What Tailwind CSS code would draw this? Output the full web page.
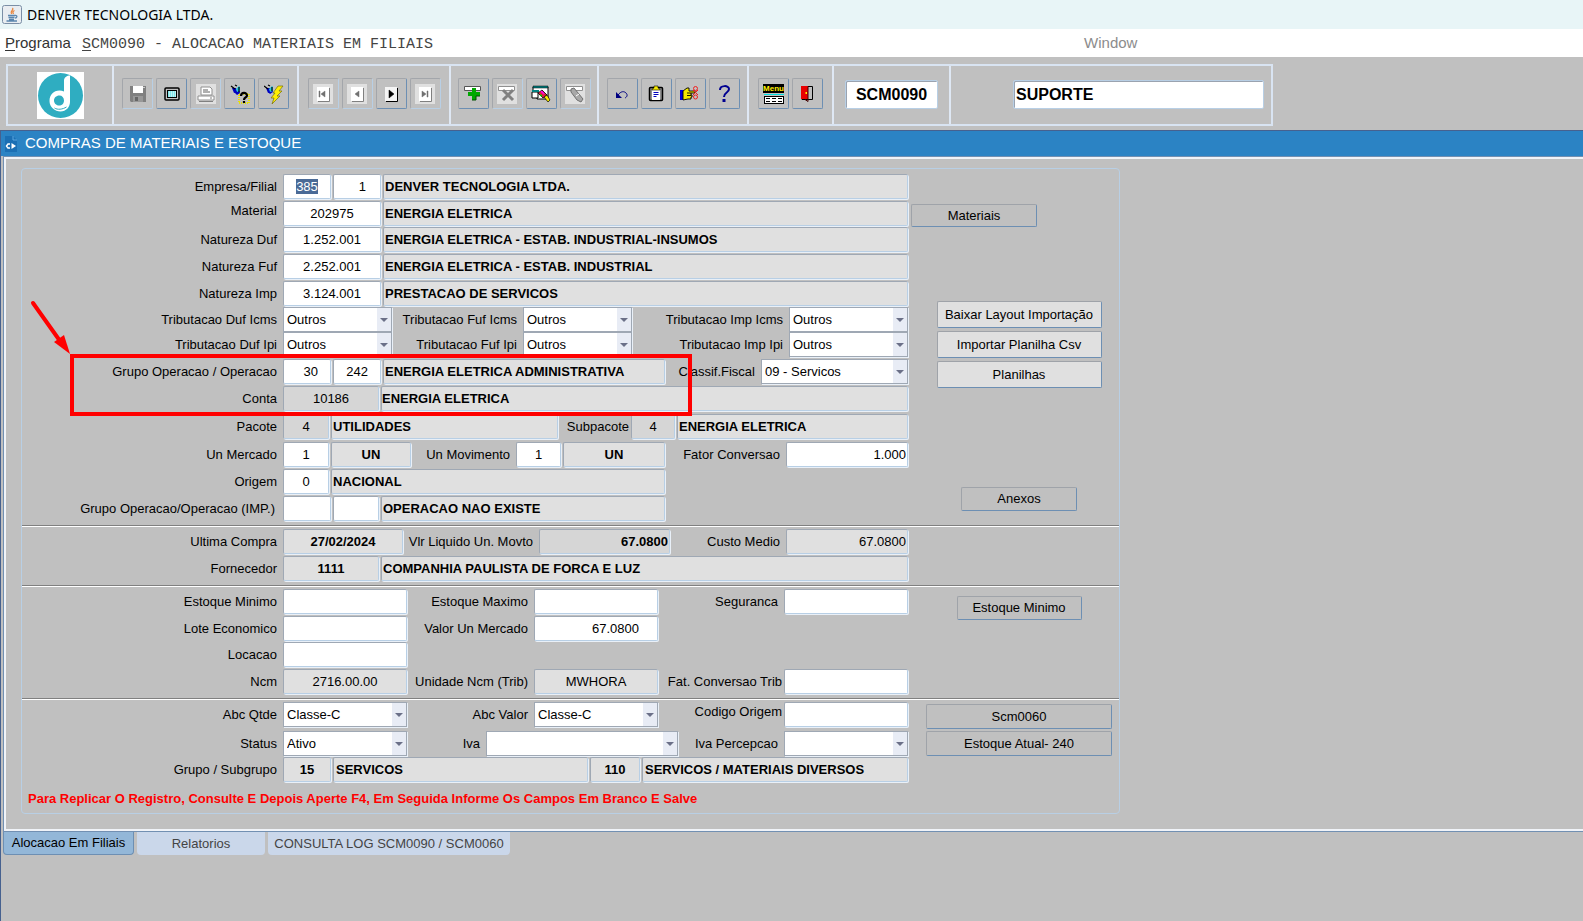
<!DOCTYPE html>
<html lang="pt-BR">
<head>
    <meta charset="UTF-8">
    <meta name="viewport" content="width=device-width, initial-scale=1.0">
    <title>DENVER TECNOLOGIA LTDA.</title>
    <script src="https://cdn.jsdelivr.net/npm/@tailwindcss/browser@4"></script>
</head>
<body class="flex min-h-screen flex-col bg-[#c0c0c0] font-['Liberation_Sans',Arial,sans-serif] text-[13px] text-black">
    <!-- Shared symbols -->
    <svg class="hidden">
        <symbol id="caret" viewBox="0 0 8 4"><path d="M0 0h8L4 4z" fill="#6b7088"/></symbol>
    </svg>

    <!-- Title bar -->
    <header class="flex h-[29px] items-center gap-[5px] bg-[#e8f5f7] pl-0.5 font-['Noto_Sans','Open_Sans',sans-serif] text-sm">
        <svg class="size-5" viewBox="0 0 20 20">
            <rect x="0.5" y="0.5" width="19" height="18" rx="2" fill="#e9edf1" stroke="#7b8fa6"/>
            <path d="M10.500 3c2 2-3 3-1 6M12.500 5.500c-2 1-2 2-1 3.500" fill="none" stroke="#e8833a" stroke-width="1.300"/>
            <path d="M6 10.500h7M6.500 12.500h6M7 14.500h5M13 10.500c3-.5 2 2.500 0 2.500M4.500 16h10.500" fill="none" stroke="#5b86ae" stroke-width="1.300"/>
        </svg>
        <h1>DENVER TECNOLOGIA LTDA.</h1>
    </header>

    <!-- Menu bar -->
    <nav class="flex h-7 items-baseline bg-white pt-[3px] pl-[5px] text-[15px] text-[#333]">
        <a href="#" class="w-[77px]"><span class="underline underline-offset-2">P</span>rograma</a>
        <a href="#" class="font-['Liberation_Mono','Courier_New',monospace] text-[#444]"><span class="underline underline-offset-2">S</span>CM0090 - ALOCACAO MATERIAIS EM FILIAIS</a>
        <a href="#" class="ml-[651px] text-[#8c8c8c]">Window</a>
    </nav>

    <!-- Toolbar -->
    <div class="mx-1.5 mt-[7px] mb-1 flex h-[62px] max-w-[1267px] border-2 border-[#d9e4f2] [&>div]:flex [&>div]:items-start [&>div]:justify-center [&>div]:gap-[3px] [&>div]:border-r-2 [&>div]:border-[#dfe8f4] [&>div]:pt-3 [&>div:last-child]:border-r-0 [&_button]:flex [&_button]:h-[31px] [&_button]:w-[31px] [&_button]:items-center [&_button]:justify-center [&_button]:rounded-xs [&_button]:border [&_button]:border-[#a3a6ab] [&_button]:border-r-[#6d8fb3] [&_button]:border-b-[#6d8fb3] [&_button:disabled]:border-r-[#b8cfe5] [&_button:disabled]:border-b-[#b8cfe5] [&_button>svg]:size-5">
        <div class="w-[106px] pt-1.5!">
            <svg class="size-[47px]" viewBox="0 0 47 47">
                <rect width="47" height="47" fill="#fff"/>
                <circle cx="23.500" cy="23.500" r="22.500" fill="#2fadc1"/>
                <path d="M33 3.500V30c0 5-4 9.500-9.500 9.500S12.500 35 12.500 29s4-10.500 10-10.500c1.500 0 3 .3 4.500 1V8.500c0-3 3-5 6-5zM22.500 23.500c-3.500 0-5.500 2.500-5.500 5s2 5 5 5 5-2 5-5-2-5-4.500-5z" fill="#fff" fill-rule="evenodd"/>
                <path d="M17.500 36c3 2 8 1.500 12-1" fill="none" stroke="#2fadc1" stroke-width="1"/>
            </svg>
        </div>
        <div class="w-[185px]">
            <button disabled aria-label="Salvar">
                <svg viewBox="0 0 20 20"><path d="M2 2h16v16H3l-1-1z" fill="#808080"/><path d="M5 2h10v7H5z" fill="#fff"/><path d="M5 12h10v6H5z" fill="#989898"/><path d="M7 13h3v4H7z" fill="#666"/><path d="M15 3h2v1h-2z" fill="#ccc"/></svg>
            </button>
            <button aria-label="Tela">
                <svg viewBox="0 0 20 20"><rect x="3" y="4" width="14" height="12" rx="1" fill="#c0c0c0" stroke="#000" stroke-width="1.500"/><rect x="5.500" y="6.500" width="9" height="7" fill="#7fe6ea" stroke="#000"/><path d="M7 8h7M7 10h7M7 12h7" stroke="#fff" stroke-dasharray="1 1"/></svg>
            </button>
            <button disabled aria-label="Imprimir">
                <svg viewBox="0 0 20 20"><path d="M0 0h20v20H0z" fill="#e0e0e0"/><path d="M5 3h9l2 2v6H5z" fill="#fff" stroke="#909090"/><path d="M7 6h5M7 8h7" stroke="#606060"/><path d="M2 12h16v4H2z" fill="#fff" stroke="#909090"/><path d="M3 17.500h14M14 14h2" stroke="#808080"/></svg>
            </button>
            <button aria-label="Entrar consulta">
                <svg viewBox="0 0 20 20"><path d="M9 10h10v9H9z" fill="none" stroke="#e8e000" stroke-dasharray="1 1" stroke-width="2"/><path d="M2 4h4l1 4-3 1z" fill="#0000c0"/><path d="M4 8l5-3 1 4-3 2z" fill="#0000c0"/><path d="M6 5l3-3 1 1v4l-3 1z" fill="#20c8e0"/><path d="M1 2l4 3M5 1l2 1M9 3v5" stroke="#000" stroke-width="1.200"/><path d="M11 12c0-4 6-4 6-.5 0 2-3 2-3 4.500M14 17v2" fill="none" stroke="#000" stroke-width="2.200"/></svg>
            </button>
            <button aria-label="Executar consulta">
                <svg viewBox="0 0 20 20"><path d="M2 4h4l1 4-3 1z" fill="#0000c0"/><path d="M4 8l4-3 1 3-3 2z" fill="#0000c0"/><path d="M5 5l3-3 1 1v4l-3 1z" fill="#20c8e0"/><path d="M0 2l4 3M4 1l2 1M8 3v4" stroke="#000" stroke-width="1.200"/><path d="M14 2h5l-4 5h3l-5 5h3l-8 8 2-6H7l4-5H9z" fill="#ffef00" stroke="#77710a" stroke-width=".7"/></svg>
            </button>
        </div>
        <div class="w-[152px]">
            <button disabled aria-label="Primeiro">
                <svg viewBox="0 0 20 20"><path d="M0 0h20v20H0z" fill="#e0e0e0"/><path d="M4 3h12v14H4z" fill="#fff"/><path d="M16.500 4v13.500H5" fill="none" stroke="#808080"/><path d="M6 7h1v6H6zM12 7v6l-4-3z" fill="#707070" stroke="#707070" stroke-width=".5"/></svg>
            </button>
            <button disabled aria-label="Anterior">
                <svg viewBox="0 0 20 20"><path d="M0 0h20v20H0z" fill="#e0e0e0"/><path d="M4 3h12v14H4z" fill="#fff"/><path d="M16.500 4v13.500H5" fill="none" stroke="#808080"/><path d="M12 7v6l-4-3z" fill="#707070" stroke="#707070" stroke-width=".5"/></svg>
            </button>
            <button aria-label="Proximo">
                <svg viewBox="0 0 20 20"><path d="M4 3h12v14H4z" fill="#f4f4f4"/><path d="M16.500 4v13.500H5" fill="none" stroke="#000"/><path d="M8 6v8l5-4z" stroke="#000" stroke-width=".5"/></svg>
            </button>
            <button disabled aria-label="Ultimo">
                <svg viewBox="0 0 20 20"><path d="M0 0h20v20H0z" fill="#e0e0e0"/><path d="M4 3h12v14H4z" fill="#fff"/><path d="M16.500 4v13.500H5" fill="none" stroke="#808080"/><path d="M12 7h1v6h-1zM7 7v6l4-3z" fill="#707070" stroke="#707070" stroke-width=".5"/></svg>
            </button>
        </div>
        <div class="w-[148px]">
            <button aria-label="Inserir registro">
                <svg viewBox="0 0 20 20"><path d="M1.500 2.500h16v4h-16z" fill="#fff" stroke="#555"/><path d="M9 4h4v4h4v4h-4v4H9v-4H5V8h4z" fill="#00a800"/><path d="M13 16H9M17 12h-4v4" fill="none" stroke="#005000"/></svg>
            </button>
            <button disabled aria-label="Remover registro">
                <svg viewBox="0 0 20 20"><path d="M0 0h20v20H0z" fill="#e0e0e0"/><path d="M1.500 2.500h16v4h-16z" fill="#fff" stroke="#909090"/><path d="M6 6l10 10M16 6L6 16" stroke="#808080" stroke-width="3"/></svg>
            </button>
            <button aria-label="Bloquear registro">
                <svg viewBox="0 0 20 20"><path d="M2 3h15v12H6V9H2z" fill="#fff" stroke="#000"/><path d="M2 2h15v2H2z" fill="#008080" stroke="#000" stroke-width=".5"/><path d="M1 8h6v6H1z" fill="#fff" stroke="#000"/><path d="M1 6h7v2H1z" fill="#008080"/><path d="M7 9l4-3 5 5-4 3z" fill="#e02040" stroke="#000" stroke-width=".8"/><path d="M10 7l3 3" stroke="#f0f" stroke-width="1.500"/><path d="M9 11l2 1" stroke="#0c0" stroke-width="1.500"/><path d="M13 13l3-2 3 5-2 2z" fill="#f5e800" stroke="#000" stroke-width=".7"/></svg>
            </button>
            <button disabled aria-label="Limpar registro">
                <svg viewBox="0 0 20 20"><path d="M0 0h20v20H0z" fill="#e0e0e0"/><path d="M1.500 2.500h16v4h-16z" fill="#fff" stroke="#909090"/><path d="M6 5l3-1 9 11-2 3-4-2L6 8z" fill="#a8a8a8" stroke="#707070"/><path d="M11 12l3-2" stroke="#fff"/></svg>
            </button>
        </div>
        <div class="w-[150px]">
            <button aria-label="Desfazer">
                <svg viewBox="0 0 20 20"><path d="M6 11c3-4 6-4 8-2s1 4-1 5" fill="none" stroke="#000080"/><path d="M4 8v6h6z" fill="#000080"/></svg>
            </button>
            <button aria-label="Lista">
                <svg viewBox="0 0 20 20"><rect x="3.500" y="3.500" width="13" height="13" rx="1" fill="#909090" stroke="#000" stroke-width="1.500"/><path d="M6 5h8v11H6z" fill="#fff"/><path d="M7.500 8.500h5M7.500 10.500h5M7.500 12.500h3" stroke="#0000c0"/><path d="M6 5l2-1V2h4v2l2 1v1H6z" fill="#f5e800" stroke="#000" stroke-width=".6"/></svg>
            </button>
            <button aria-label="Editar">
                <svg viewBox="0 0 20 20"><path d="M0 6h3v10H0z" fill="#0000d8"/><path d="M3 7l4-3h2v3h6v2h-4v2h1v2h-1v2H8l-5 1z" fill="#f5e800" stroke="#000" stroke-width=".9"/><path d="M7 9h4M7 11.500h4" stroke="#000" stroke-width=".9"/><circle cx="15.500" cy="4.500" r="2" fill="none" stroke="#f02020"/><circle cx="15.500" cy="13" r="2" fill="none" stroke="#f02020"/><path d="M13 6l5 5M18 6l-5 5" stroke="#f02020"/></svg>
            </button>
            <button aria-label="Ajuda">
                <svg viewBox="0 0 20 20"><path d="M6 6c0-5 9-5 9-1 0 4-5 3-5 8" fill="none" stroke="#000090" stroke-width="2"/><path d="M8.500 15h3v3h-3z" fill="#000090"/></svg>
            </button>
        </div>
        <div class="w-[85px]">
            <button aria-label="Menu" class="flex-col text-[8px] leading-[9px] font-bold">
                <span class="bg-black text-[#ffef00]">Menu</span>
                <span class="my-px h-px w-5 bg-[#00e0e0]"></span>
                <span class="grid h-2 w-5 grid-cols-3 gap-0.5 border border-black bg-white p-px">
                    <i class="h-px bg-black"></i><i class="h-px bg-black"></i><i class="h-px bg-black"></i>
                    <i class="h-px bg-black"></i><i class="h-px bg-black"></i><i class="h-px bg-black"></i>
                </span>
            </button>
            <button aria-label="Sair">
                <svg viewBox="0 0 20 20"><path d="M4 2.500h10.500v13H4z" fill="#c0c0c0" stroke="#000"/><path d="M3 2h7v13H3z" fill="#e80000"/><path d="M10 2.500v15l-3-2" fill="none" stroke="#400"/><path d="M7.500 8H9v2H7.500z" fill="#ffef00"/></svg>
            </button>
        </div>
        <div class="w-[117px]">
            <input aria-label="Programa" value="SCM0090" class="mt-0.5 h-[29px] w-[93px] rounded-xs border border-[#b8cfe5] bg-white text-center text-base font-bold inset-shadow-[1px_1px_0_#9aa3b0]">
        </div>
        <div class="flex-1 justify-end! pr-[7px]">
            <input aria-label="Usuario" value="SUPORTE" class="mt-0.5 h-[29px] w-[251px] rounded-xs border border-[#b8cfe5] bg-white pl-0.5 text-base font-bold inset-shadow-[1px_1px_0_#9aa3b0]">
        </div>
    </div>

    <!-- Program window -->
    <main class="flex flex-1 flex-col border-t border-l border-[#46618f]">
        <div class="flex h-[25px] items-center gap-2 bg-[#2b83c4] pl-1 text-[15px] text-white">
            <svg class="h-4 w-3" viewBox="0 0 12 16"><path d="M0 0h8l4 4v12H0z" fill="#1b6fb4"/><path d="M8 0v4h4" fill="none" stroke="#5aa6de"/><path d="M5 8H3L1.500 10 3 12h2" fill="none" stroke="#fff" stroke-width="1.500"/><path d="M6.500 7l4.500 3-4.500 3z" fill="#fff"/></svg>
            <h2>COMPRAS DE MATERIAIS E ESTOQUE</h2>
        </div>

        <div class="ml-0.5 border-y border-l border-[#7290b2]">
            <div class="border-y-2 border-l-2 border-[#f0f3f8] pt-[9px] pr-[460px] pb-[15px] pl-[15px]">
                <form class="relative max-w-[1099px] rounded border border-[#b8cfe5] [&_.row]:flex [&_.row]:items-start [&_.row]:gap-0.5 [&_input]:h-[25px] [&_input]:min-w-0 [&_input]:rounded-xs [&_input]:border [&_input]:border-[#b8cfe5] [&_input]:border-t-[#9fa8b4] [&_input]:border-l-[#9fa8b4] [&_input]:bg-white [&_input]:px-px [&_input]:shadow-[1px_1px_0_#e9f0f8] [&_input]:outline-none [&_input:read-only]:bg-[#e0e0e0] [&_label]:pr-1 [&_label]:text-right [&_label]:leading-[26px] [&_label]:whitespace-nowrap [&_.pick]:relative [&_.pick_select]:h-[25px] [&_.pick_select]:w-full [&_.pick_select]:appearance-none [&_.pick_select]:border [&_.pick_select]:border-[#9fa8b4] [&_.pick_select]:bg-white [&_.pick_select]:pl-[3px] [&_.pick_select]:shadow-[1px_1px_0_#e9f0f8] [&_.pick>span]:pointer-events-none [&_.pick>span]:absolute [&_.pick>span]:top-px [&_.pick>span]:right-px [&_.pick>span]:flex [&_.pick>span]:h-[23px] [&_.pick>span]:w-3.5 [&_.pick>span]:items-center [&_.pick>span]:justify-center [&_.pick>span]:bg-[#e8ecf5] [&_.pick_svg]:h-1 [&_.pick_svg]:w-2 [&_button]:rounded-xs [&_button]:border [&_button]:border-[#9fa3a9] [&_button]:border-r-[#6d8fb3] [&_button]:border-b-[#6d8fb3]">

                    <!-- Material e operacao -->
                    <section class="flex pt-[5px]">
                        <div class="w-[886px]">
                            <div class="row h-[27px]">
                                <label for="empresa" class="w-[259px]">Empresa/Filial</label>
                                <input id="empresa" value="385" class="w-12 text-center selection:bg-[#4a6a96] selection:text-white">
                                <input aria-label="Filial" value="1" class="w-12 pr-3.5! text-right">
                                <input aria-label="Nome da empresa" readonly value="DENVER TECNOLOGIA LTDA." class="flex-1 font-bold">
                            </div>
                            <div class="row h-[26px]">
                                <label for="material" class="w-[259px] leading-5!">Material</label>
                                <input id="material" value="202975" class="w-[98px] text-center">
                                <input aria-label="Descricao do material" readonly value="ENERGIA ELETRICA" class="flex-1 font-bold">
                            </div>
                            <div class="row h-[27px]">
                                <label for="nat-duf" class="w-[259px]">Natureza Duf</label>
                                <input id="nat-duf" value="1.252.001" class="w-[98px] text-center">
                                <input aria-label="Descricao natureza duf" readonly value="ENERGIA ELETRICA - ESTAB. INDUSTRIAL-INSUMOS" class="flex-1 font-bold">
                            </div>
                            <div class="row h-[27px]">
                                <label for="nat-fuf" class="w-[259px]">Natureza Fuf</label>
                                <input id="nat-fuf" value="2.252.001" class="w-[98px] text-center">
                                <input aria-label="Descricao natureza fuf" readonly value="ENERGIA ELETRICA - ESTAB. INDUSTRIAL" class="flex-1 font-bold">
                            </div>
                            <div class="row h-[26px]">
                                <label for="nat-imp" class="w-[259px]">Natureza Imp</label>
                                <input id="nat-imp" value="3.124.001" class="w-[98px] text-center">
                                <input aria-label="Descricao natureza imp" readonly value="PRESTACAO DE SERVICOS" class="flex-1 font-bold">
                            </div>
                            <div class="row h-[25px]">
                                <label for="duf-icms" class="w-[259px]">Tributacao Duf Icms</label>
                                <div class="pick w-[109px]"><select id="duf-icms"><option>Outros</option></select><span><svg><use href="#caret"/></svg></span></div>
                                <label for="fuf-icms" class="w-[127px]">Tributacao Fuf Icms</label>
                                <div class="pick w-[109px]"><select id="fuf-icms"><option>Outros</option></select><span><svg><use href="#caret"/></svg></span></div>
                                <label for="imp-icms" class="w-[153px]">Tributacao Imp Icms</label>
                                <div class="pick flex-1"><select id="imp-icms"><option>Outros</option></select><span><svg><use href="#caret"/></svg></span></div>
                            </div>
                            <div class="row h-[27px]">
                                <label for="duf-ipi" class="w-[259px]">Tributacao Duf Ipi</label>
                                <div class="pick w-[109px]"><select id="duf-ipi"><option>Outros</option></select><span><svg><use href="#caret"/></svg></span></div>
                                <label for="fuf-ipi" class="w-[127px]">Tributacao Fuf Ipi</label>
                                <div class="pick w-[109px]"><select id="fuf-ipi"><option>Outros</option></select><span><svg><use href="#caret"/></svg></span></div>
                                <label for="imp-ipi" class="w-[153px]">Tributacao Imp Ipi</label>
                                <div class="pick flex-1"><select id="imp-ipi"><option>Outros</option></select><span><svg><use href="#caret"/></svg></span></div>
                            </div>
                            <div class="row h-[27px]">
                                <label for="grupo-op" class="w-[259px]">Grupo Operacao / Operacao</label>
                                <input id="grupo-op" value="30" class="w-12 pr-3! text-right">
                                <input aria-label="Operacao" value="242" class="w-12 pr-3! text-right">
                                <input aria-label="Descricao da operacao" readonly value="ENERGIA ELETRICA ADMINISTRATIVA" class="w-[282px] font-bold">
                                <label for="classif" class="w-[92px]">Classif.Fiscal</label>
                                <div class="pick flex-1"><select id="classif"><option>09 - Servicos</option></select><span><svg><use href="#caret"/></svg></span></div>
                            </div>
                            <div class="row h-7">
                                <label for="conta" class="w-[259px]">Conta</label>
                                <input id="conta" readonly value="10186" class="w-24 bg-[#d6d6d6]! text-center">
                                <input aria-label="Descricao da conta" readonly value="ENERGIA ELETRICA" class="flex-1 pl-0! font-bold">
                            </div>
                            <div class="row h-7">
                                <label for="pacote" class="w-[259px]">Pacote</label>
                                <input id="pacote" readonly value="4" class="w-[46px] bg-[#d6d6d6]! text-center">
                                <input aria-label="Descricao do pacote" readonly value="UTILIDADES" class="w-[227px] font-bold">
                                <label for="subpacote" class="w-[69px] pr-0!">Subpacote</label>
                                <input id="subpacote" readonly value="4" class="w-11 bg-[#d6d6d6]! text-center">
                                <input aria-label="Descricao do subpacote" readonly value="ENERGIA ELETRICA" class="flex-1 font-bold">
                            </div>
                            <div class="row h-[27px]">
                                <label for="un-mercado" class="w-[259px]">Un Mercado</label>
                                <input id="un-mercado" value="1" class="w-[46px] text-center">
                                <input aria-label="Unidade mercado" readonly value="UN" class="w-[80px] text-center font-bold">
                                <label for="un-mov" class="w-[101px]">Un Movimento</label>
                                <input id="un-mov" value="1" class="w-[45px] text-center">
                                <input aria-label="Unidade movimento" readonly value="UN" class="w-[102px] text-center font-bold">
                                <label for="fator" class="w-[117px]">Fator Conversao</label>
                                <input id="fator" value="1.000" class="flex-1 text-right">
                            </div>
                            <div class="row h-[27px]">
                                <label for="origem" class="w-[259px]">Origem</label>
                                <input id="origem" value="0" class="w-[46px] text-center">
                                <input aria-label="Descricao da origem" readonly value="NACIONAL" class="w-[334px] font-bold">
                            </div>
                            <div class="row h-[29px]">
                                <label for="grupo-imp" class="w-[259px] pr-1.5!">Grupo Operacao/Operacao (IMP.)</label>
                                <input id="grupo-imp" class="w-12">
                                <input aria-label="Operacao imp" class="w-[46px]">
                                <input aria-label="Descricao operacao imp" readonly value="OPERACAO NAO EXISTE" class="w-[284px] font-bold">
                            </div>
                        </div>
                        <div class="flex flex-1 flex-col items-center pt-[30px] pl-[3px]">
                            <button type="button" class="h-[23px] w-[126px] self-start">Materiais</button>
                            <div class="mt-[74px] flex flex-col gap-[3px] pl-2">
                                <button type="button" class="h-[27px] w-[165px] bg-[#e0e0e0]">Baixar Layout Importação</button>
                                <button type="button" class="h-[27px] w-[165px] bg-[#e0e0e0]">Importar Planilha Csv</button>
                                <button type="button" class="h-[27px] w-[165px] bg-[#e0e0e0]">Planilhas</button>
                            </div>
                            <button type="button" class="mt-[99px] ml-2 h-6 w-[116px]">Anexos</button>
                        </div>
                    </section>

                    <!-- Ultima compra -->
                    <section class="border-t border-[#808080] shadow-[inset_0_1px_0_#fff]">
                        <div class="w-[886px] pt-[3px]">
                            <div class="row h-[27px]">
                                <label for="ult-compra" class="w-[259px]">Ultima Compra</label>
                                <input id="ult-compra" readonly value="27/02/2024" class="w-[120px] text-center font-bold">
                                <label for="vlr-liq" class="w-[132px]">Vlr Liquido Un. Movto</label>
                                <input id="vlr-liq" readonly value="67.0800" class="w-[131px] bg-[#d6d6d6]! text-right font-bold">
                                <label for="custo" class="w-28">Custo Medio</label>
                                <input id="custo" readonly value="67.0800" class="flex-1 text-right">
                            </div>
                            <div class="row h-[29px]">
                                <label for="fornecedor" class="w-[259px]">Fornecedor</label>
                                <input id="fornecedor" readonly value="1111" class="w-24 text-center font-bold">
                                <input aria-label="Nome do fornecedor" readonly value="COMPANHIA PAULISTA DE FORCA E LUZ" class="flex-1 font-bold">
                            </div>
                        </div>
                    </section>

                    <!-- Estoque -->
                    <section class="flex border-t border-[#808080] pt-[3px] shadow-[inset_0_1px_0_#fff]">
                        <div class="w-[886px]">
                            <div class="row h-[27px]">
                                <label for="est-min" class="w-[259px]">Estoque Minimo</label>
                                <input id="est-min" class="w-[124px]">
                                <label for="est-max" class="w-[123px]">Estoque Maximo</label>
                                <input id="est-max" class="w-[124px]">
                                <label for="seguranca" class="w-[122px]">Seguranca</label>
                                <input id="seguranca" class="flex-1">
                            </div>
                            <div class="row h-[26px]">
                                <label for="lote" class="w-[259px]">Lote Economico</label>
                                <input id="lote" class="w-[124px]">
                                <label for="valor-un" class="w-[123px]">Valor Un Mercado</label>
                                <input id="valor-un" value="67.0800" class="w-[124px] pr-[18px]! text-right">
                            </div>
                            <div class="row h-[27px]">
                                <label for="locacao" class="w-[259px]">Locacao</label>
                                <input id="locacao" class="w-[124px]">
                            </div>
                            <div class="row h-[29px]">
                                <label for="ncm" class="w-[259px]">Ncm</label>
                                <input id="ncm" readonly value="2716.00.00" class="w-[124px] text-center">
                                <label for="un-ncm" class="w-[123px]">Unidade Ncm (Trib)</label>
                                <input id="un-ncm" readonly value="MWHORA" class="w-[124px] text-center">
                                <label for="fat-trib" class="w-[122px] pr-0!">Fat. Conversao Trib</label>
                                <input id="fat-trib" class="flex-1">
                            </div>
                        </div>
                        <div class="flex flex-1 flex-col items-center pt-[7px] pl-[11px]">
                            <button type="button" class="h-6 w-[125px]">Estoque Minimo</button>
                        </div>
                    </section>

                    <!-- Classificacao -->
                    <section class="flex border-t border-[#808080] pt-[3px] shadow-[inset_0_1px_0_#fff]">
                        <div class="w-[886px]">
                            <div class="row h-[29px]">
                                <label for="abc-qtde" class="w-[259px]">Abc Qtde</label>
                                <div class="pick w-[124px]"><select id="abc-qtde"><option>Classe-C</option></select><span><svg><use href="#caret"/></svg></span></div>
                                <label for="abc-valor" class="w-[123px]">Abc Valor</label>
                                <div class="pick w-[124px]"><select id="abc-valor"><option>Classe-C</option></select><span><svg><use href="#caret"/></svg></span></div>
                                <label for="cod-origem" class="w-[122px] pr-0! leading-5!">Codigo Origem</label>
                                <input id="cod-origem" class="flex-1">
                            </div>
                            <div class="row h-[26px]">
                                <label for="status" class="w-[259px]">Status</label>
                                <div class="pick w-[124px]"><select id="status"><option>Ativo</option></select><span><svg><use href="#caret"/></svg></span></div>
                                <label for="iva" class="w-[75px]">Iva</label>
                                <div class="pick w-48"><select id="iva"><option></option></select><span><svg><use href="#caret"/></svg></span></div>
                                <label for="iva-perc" class="w-[102px]">Iva Percepcao</label>
                                <div class="pick flex-1"><select id="iva-perc"><option></option></select><span><svg><use href="#caret"/></svg></span></div>
                            </div>
                            <div class="row h-[27px]">
                                <label for="grupo" class="w-[259px]">Grupo / Subgrupo</label>
                                <input id="grupo" readonly value="15" class="w-12 text-center font-bold">
                                <input aria-label="Descricao do grupo" readonly value="SERVICOS" class="w-[255px] pl-0.5! font-bold">
                                <input aria-label="Subgrupo" readonly value="110" class="w-[50px] text-center font-bold">
                                <input aria-label="Descricao do subgrupo" readonly value="SERVICOS / MATERIAIS DIVERSOS" class="flex-1 pl-0.5! font-bold">
                            </div>
                            <p class="h-[29px] pl-1.5 leading-[30px] font-bold text-[#f00]">Para Replicar O Registro, Consulte E Depois Aperte F4, Em Seguida Informe Os Campos Em Branco E Salve</p>
                        </div>
                        <div class="flex flex-1 flex-col items-center gap-0.5 pt-0.5 pl-[11px]">
                            <button type="button" class="h-[25px] w-[186px]">Scm0060</button>
                            <button type="button" class="h-[25px] w-[186px]">Estoque Atual- 240</button>
                        </div>
                    </section>

                    <!-- Callout over the operation fields -->
                    <div class="pointer-events-none absolute top-[185px] left-12 h-[62px] w-[622px] border-4 border-[#f00]"></div>
                    <svg class="pointer-events-none absolute top-[130px] left-2 h-14 w-11" viewBox="0 0 44 56">
                        <path d="M3 4L30 42" stroke="#f00" stroke-width="4" stroke-linecap="round"/>
                        <path d="M24 43L34 36L40 55z" fill="#f00"/>
                    </svg>
                </form>
            </div>
        </div>

        <!-- Tabs -->
        <div class="flex gap-[3px] pl-0.5 text-[#444] [&>button]:h-[23px] [&>button]:rounded-b">
            <button class="w-[131px] border border-t-0 border-[#6d8fb3] bg-[#93b7d8] text-black">Alocacao Em Filiais</button>
            <button class="w-32 bg-[#cad7ea]">Relatorios</button>
            <button class="w-[242px] bg-[#cad7ea]">CONSULTA LOG SCM0090 / SCM0060</button>
        </div>
    </main>

    <script>
        // The first field starts focused with its value selected
        const empresa = document.getElementById('empresa');
        empresa.focus();
        empresa.select();
    </script>
</body>
</html>
